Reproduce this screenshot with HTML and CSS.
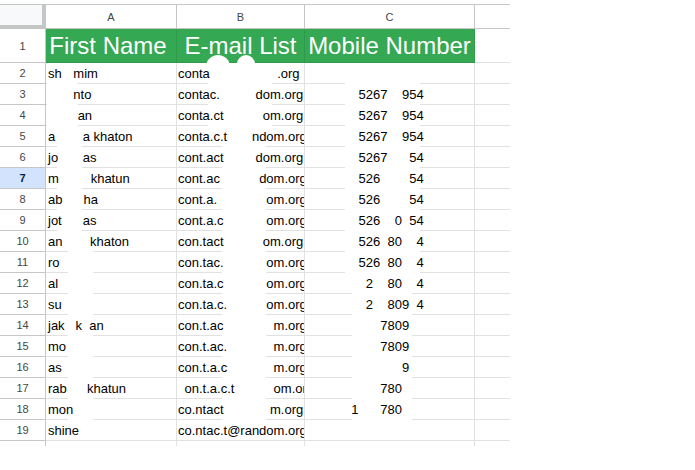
FILE: index.html
```html
<!DOCTYPE html>
<html>
<head>
<meta charset="utf-8">
<link rel="stylesheet" href="styles.css">
</head>
<body>
<div class="sheet">
  <div class="grid">
    <div class="c corner"></div>
    <div class="c ch">A</div>
    <div class="c ch">B</div>
    <div class="c ch">C</div>
    <div class="c ch d"></div>

    <div class="c rh">1</div>
    <div class="c g g-first"><span class="t">First Name</span></div>
    <div class="c g"><span class="t">E-mail List</span></div>
    <div class="c g"><span class="t">Mobile Number</span></div>
    <div class="c d"></div>

    <div class="c rh">2</div>
    <div class="c a"><span class="t">sh<span class="h">ar</span>mim</span></div>
    <div class="c b"><span class="t">conta<span class="h">ct@random</span>.org</span></div>
    <div class="c n"></div>
    <div class="c d"></div>

    <div class="c rh">3</div>
    <div class="c a"><span class="t"><span class="h">shar</span>nto</span></div>
    <div class="c b"><span class="t">contac.<span class="h">t@ran</span>dom.org</span></div>
    <div class="c n"><span class="t"><span class="h">1</span>5267<span class="h">80</span>954</span></div>
    <div class="c d"></div>

    <div class="c rh">4</div>
    <div class="c a"><span class="t"><span class="h">rehm</span>an</span></div>
    <div class="c b"><span class="t">conta.ct<span class="h">@rand</span>om.org</span></div>
    <div class="c n"><span class="t"><span class="h">1</span>5267<span class="h">80</span>954</span></div>
    <div class="c d"></div>

    <div class="c rh">5</div>
    <div class="c a"><span class="t">a<span class="h">yesh</span>a khaton</span></div>
    <div class="c b"><span class="t">conta.c.t<span class="h">@ra</span>ndom.org</span></div>
    <div class="c n"><span class="t"><span class="h">1</span>5267<span class="h">80</span>954</span></div>
    <div class="c d"></div>

    <div class="c rh">6</div>
    <div class="c a"><span class="t">jo<span class="h">y dh</span>as</span></div>
    <div class="c b"><span class="t">cont.act<span class="h">@ran</span>dom.org</span></div>
    <div class="c n"><span class="t"><span class="h">1</span>5267<span class="h">809</span>54</span></div>
    <div class="c d"></div>

    <div class="c rh sel">7</div>
    <div class="c a"><span class="t">m<span class="h">osna </span>khatun</span></div>
    <div class="c b"><span class="t">cont.ac<span class="h">.t@ran</span>dom.org</span></div>
    <div class="c n"><span class="t"><span class="h">1</span>526<span class="h">7809</span>54</span></div>
    <div class="c d"></div>

    <div class="c rh">8</div>
    <div class="c a"><span class="t">ab<span class="h">ersi</span>ha</span></div>
    <div class="c b"><span class="t">cont.a.<span class="h">ct@rand</span>om.org</span></div>
    <div class="c n"><span class="t"><span class="h">1</span>526<span class="h">7809</span>54</span></div>
    <div class="c d"></div>

    <div class="c rh">9</div>
    <div class="c a"><span class="t">jot<span class="h">i dh</span>as</span></div>
    <div class="c b"><span class="t">cont.a.c<span class="h">t@rand</span>om.org</span></div>
    <div class="c n"><span class="t"><span class="h">1</span>526<span class="h">78</span>0<span class="h">9</span>54</span></div>
    <div class="c d"></div>

    <div class="c rh">10</div>
    <div class="c a"><span class="t">an<span class="h">isha </span>khaton</span></div>
    <div class="c b"><span class="t">con.tact<span class="h">@rand</span>om.org</span></div>
    <div class="c n"><span class="t"><span class="h">1</span>526<span class="h">7</span>80<span class="h">95</span>4</span></div>
    <div class="c d"></div>

    <div class="c rh">11</div>
    <div class="c a"><span class="t">ro</span></div>
    <div class="c b"><span class="t">con.tac.<span class="h">t@rand</span>om.org</span></div>
    <div class="c n"><span class="t"><span class="h">1</span>526<span class="h">7</span>80<span class="h">95</span>4</span></div>
    <div class="c d"></div>

    <div class="c rh">12</div>
    <div class="c a"><span class="t">al</span></div>
    <div class="c b"><span class="t">con.ta.c<span class="h">t@rand</span>om.org</span></div>
    <div class="c n"><span class="t"><span class="h">15</span>2<span class="h">67</span>80<span class="h">95</span>4</span></div>
    <div class="c d"></div>

    <div class="c rh">13</div>
    <div class="c a"><span class="t">su</span></div>
    <div class="c b"><span class="t">con.ta.c.<span class="h">@rand</span>om.org</span></div>
    <div class="c n"><span class="t"><span class="h">15</span>2<span class="h">67</span>809<span class="h">5</span>4</span></div>
    <div class="c d"></div>

    <div class="c rh">14</div>
    <div class="c a"><span class="t">jak<span class="h">ir </span>k<span class="h">h</span>an</span></div>
    <div class="c b"><span class="t">con.t.ac<span class="h">t@rando</span>m.org</span></div>
    <div class="c n"><span class="t"><span class="h">1526</span>7809<span class="h">54</span></span></div>
    <div class="c d"></div>

    <div class="c rh">15</div>
    <div class="c a"><span class="t">mo</span></div>
    <div class="c b"><span class="t">con.t.ac.<span class="h">@rando</span>m.org</span></div>
    <div class="c n"><span class="t"><span class="h">1526</span>7809<span class="h">54</span></span></div>
    <div class="c d"></div>

    <div class="c rh">16</div>
    <div class="c a"><span class="t">as</span></div>
    <div class="c b"><span class="t">con.t.a.c<span class="h">@rando</span>m.org</span></div>
    <div class="c n"><span class="t"><span class="h">1526780</span>9<span class="h">54</span></span></div>
    <div class="c d"></div>

    <div class="c rh">17</div>
    <div class="c a"><span class="t">rab<span class="h">iya </span>khatun</span></div>
    <div class="c b"><span class="t"><span class="h">c</span>on.t.a.c.t<span class="h">@rand</span>om.org</span></div>
    <div class="c n"><span class="t"><span class="h">1526</span>780<span class="h">954</span></span></div>
    <div class="c d"></div>

    <div class="c rh">18</div>
    <div class="c a"><span class="t">mon</span></div>
    <div class="c b"><span class="t">co.ntact<span class="h">@rando</span>m.org</span></div>
    <div class="c n"><span class="t">1<span class="h">526</span>780<span class="h">954</span></span></div>
    <div class="c d"></div>

    <div class="c rh">19</div>
    <div class="c a"><span class="t">shine</span></div>
    <div class="c b"><span class="t">co.ntac.t@random.org</span></div>
    <div class="c n"></div>
    <div class="c d"></div>

    <div class="c rh last"></div>
    <div class="c last"></div>
    <div class="c last"></div>
    <div class="c last"></div>
    <div class="c last d"></div>
  </div>

  <div class="mask m1"></div>
  <div class="mask m2"></div>
  <div class="mask m3"></div>
  <div class="mask m4"></div>
  <div class="mask m5"></div>
  <div class="mask m6"></div>
  <div class="mask m7"></div>
  <div class="mask bump1"></div>
  <div class="mask bump2"></div>
</div>
</body>
</html>
```

FILE: styles.css
```css
body {
  margin: 0;
  background: #ffffff;
  font-family: "Liberation Sans", Arial, sans-serif;
}

.sheet {
  position: relative;
  margin-top: 4px;
  width: 510px;
}

.grid {
  display: grid;
  grid-template-columns: 46px 131px 128px 170px 35px;
  grid-template-rows: 24px 34px repeat(18, 21px) 5px;
  border-top: 1px solid #c4c7c5;
}

.c {
  box-sizing: border-box;
  display: flex;
  align-items: flex-end;
  padding: 0 2px 2px 2px;
  border-right: 1px solid #e1e1e1;
  border-bottom: 1px solid #e1e1e1;
  white-space: nowrap;
  overflow: hidden;
  font-size: 13px;
  color: #000000;
}

.t {
  position: relative;
  z-index: 2;
}

.h {
  visibility: hidden;
}

.corner {
  background: #f8f9fa;
  border-right: 4px solid #c4c7c5;
  border-bottom: 4px solid #c4c7c5;
}

.ch {
  align-items: center;
  justify-content: center;
  padding: 0;
  font-size: 11px;
  color: #444746;
  border-right-color: #c4c7c5;
  border-bottom-color: #c4c7c5;
}

.rh {
  align-items: center;
  justify-content: center;
  padding: 0;
  font-size: 11px;
  color: #444746;
  border-right-color: #c4c7c5;
  border-bottom-color: #c4c7c5;
}

.sel {
  background: #d3e3fd;
  color: #041e49;
  font-weight: bold;
}

.g {
  background: #34a853;
  color: #ffffff;
  font-size: 24px;
  justify-content: center;
  padding: 0 0 2px 0;
  border-right-color: #2f9a4c;
  border-bottom-color: #2f9a4c;
}

.g-first {
  padding-right: 6px;
}

.a {
  padding-left: 2px;
}

.b {
  padding-left: 1px;
}

.n {
  justify-content: center;
  padding-right: 6px;
}

.d {
  border-right: none;
}

.last {
  border-bottom: none;
}

.mask {
  position: absolute;
  z-index: 1;
  background: #ffffff;
}

.m1 { left: 47px; top: 62px; width: 31px; height: 64px; }
.m2 { left: 57px; top: 126px; width: 25px; height: 120px; }
.m3 { left: 68px; top: 246px; width: 25px; height: 188px; }
.m4 { left: 208px; top: 60px; width: 64px; height: 66px; }
.m5 { left: 222px; top: 126px; width: 44px; height: 291px; }
.m6 { left: 345px; top: 60px; width: 75px; height: 226px; }
.m7 { left: 352px; top: 286px; width: 60px; height: 148px; }

.bump1 {
  left: 206px;
  top: 51px;
  width: 24px;
  height: 24px;
  border-radius: 50%;
}

.bump2 {
  left: 237px;
  top: 51px;
  width: 18px;
  height: 18px;
  border-radius: 50%;
}
```
